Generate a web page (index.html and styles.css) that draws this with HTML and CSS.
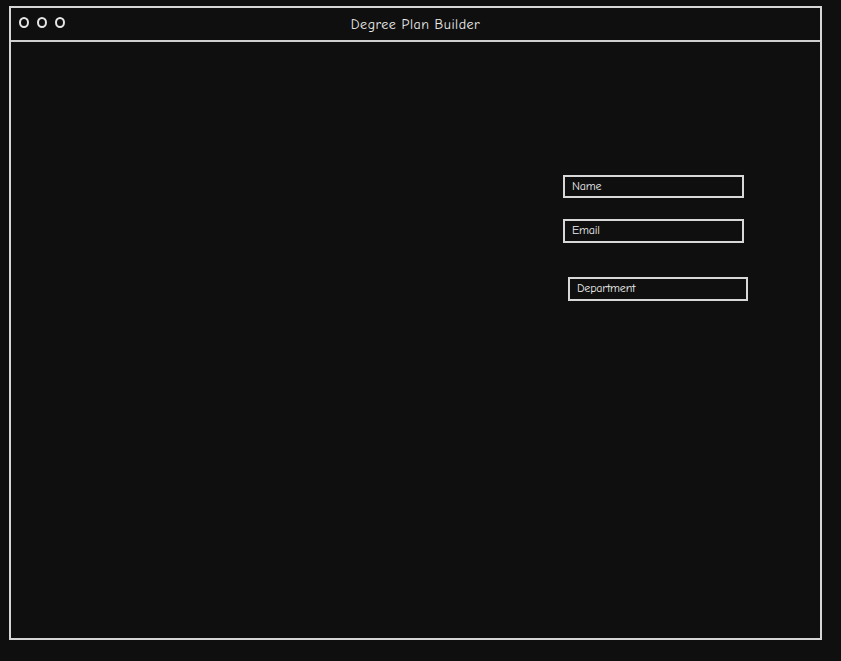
FILE: index.html
```html
<!DOCTYPE html>
<html>
<head>
<meta charset="utf-8">
<link rel="stylesheet" href="styles.css">
</head>
<body>
<div class="window">
  <div class="titlebar">
    <div class="dots">
      <span class="dot"></span><span class="dot"></span><span class="dot"></span>
    </div>
    <div class="title">Degree Plan Builder</div>
  </div>
  <div class="content">
    <div class="form">
      <div class="field">Name</div>
      <div class="field field-email">Email</div>
      <div class="field field-dept">Department</div>
    </div>
  </div>
</div>
</body>
</html>
```
FILE: styles.css
```css
html, body {
  margin: 0;
  padding: 0;
  background: #0f0f0f;
}
body {
  font-family: "Comic Neue", "DejaVu Sans", "Noto Sans", sans-serif;
  color: #ececec;
  padding: 6px 0 0 9px;
}
.window {
  box-sizing: border-box;
  width: 813px;
  height: 634px;
  border: 2px solid #d6d6d6;
  display: flex;
  flex-direction: column;
}
.titlebar {
  position: relative;
  height: 32px;
  border-bottom: 2px solid #cfcfcf;
  display: flex;
  align-items: center;
  padding-left: 8px;
}
.dots {
  display: flex;
  gap: 8px;
  margin-top: -4px;
}
.dot {
  width: 6px;
  height: 7px;
  border: 2px solid #e6e6e6;
  border-radius: 50%;
}
.title {
  position: absolute;
  left: 0;
  right: 0;
  top: 8px;
  text-align: center;
  font-size: 14px;
  letter-spacing: 0.5px;
}
.content {
  flex: 1;
  padding: 133px 0 0 552px;
}
.form {
  display: flex;
  flex-direction: column;
  align-items: flex-start;
}
.field {
  box-sizing: border-box;
  width: 181px;
  height: 23px;
  border: 2px solid #d8d8d8;
  font-size: 12px;
  line-height: 18px;
  padding-left: 7px;
  letter-spacing: -0.2px;
}
.field-email {
  margin-top: 21px;
  height: 24px;
}
.field-dept {
  margin-top: 34px;
  margin-left: 5px;
  width: 180px;
  height: 24px;
}
```
